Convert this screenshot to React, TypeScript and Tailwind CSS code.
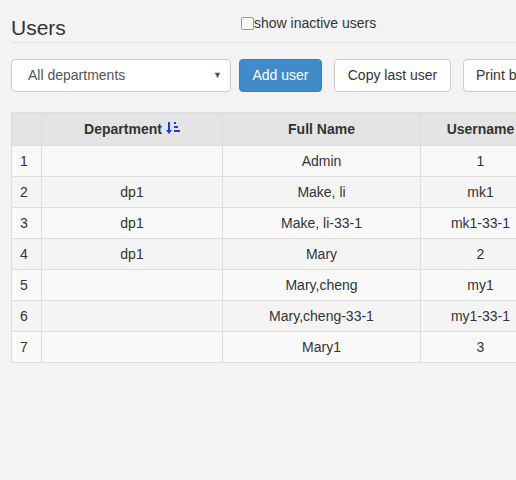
const rows = [
  ["1", "", "Admin", "1"],
  ["2", "dp1", "Make, li", "mk1"],
  ["3", "dp1", "Make, li-33-1", "mk1-33-1"],
  ["4", "dp1", "Mary", "2"],
  ["5", "", "Mary,cheng", "my1"],
  ["6", "", "Mary,cheng-33-1", "my1-33-1"],
  ["7", "", "Mary1", "3"],
];

function SortIcon() {
  return (
    <svg width="14" height="14" viewBox="0 0 14 14" className="ml-1 inline-block align-[-1px]" fill="#1a3fe0">
      <rect x="2" y="1" width="2" height="9" />
      <path d="M0 9h6l-3 4z" />
      <rect x="8" y="1" width="2" height="2" />
      <rect x="8" y="5" width="4" height="2" />
      <rect x="8" y="9" width="6" height="2" />
    </svg>
  );
}

export default function App() {
  return (
    <div className="h-[480px] w-[516px] overflow-hidden bg-[#f3f3f3] text-[14px] text-[#333]" style={{ fontFamily: "Arial, 'Liberation Sans', sans-serif" }}>
      <div className="ml-[11px]">
        <div className="flex items-end border-b border-[#e0e0e0] pt-[13px] pb-[2px]">
          <h1 className="w-[230px] text-[21px] leading-[24px]">Users</h1>
          <label className="mb-[6px] flex items-center">
            <span className="inline-block h-[13px] w-[13px] rounded-[2px] border border-[#999] bg-[#f8f8f8]" />
            show inactive users
          </label>
        </div>
        <div className="mt-[16px] flex items-center">
          <div className="relative flex h-[33px] w-[220px] shrink-0 items-center rounded-[4px] border border-[#ccc] bg-white pl-[16px] text-[#555]">
            All departments
            <span className="absolute right-[8px] top-[9px] text-[9px]">▼</span>
          </div>
          <button className="ml-[8px] h-[33px] w-[83px] shrink-0 rounded-[4px] border border-[#357ebd] bg-[#428bca] text-white">Add user</button>
          <button className="ml-[12px] h-[33px] w-[117px] shrink-0 rounded-[4px] border border-[#ccc] bg-white">Copy last user</button>
          <button className="ml-[12px] h-[33px] w-[120px] shrink-0 rounded-[4px] border border-[#ccc] bg-white pl-[12px] text-left">Print badges</button>
        </div>
        <table className="mt-[20px] w-[640px] border-collapse">
          <thead>
            <tr className="h-[33px] bg-[#e4e4e4] font-bold">
              <th className="w-[30px] border border-[#ddd]"></th>
              <th className="w-[181px] border border-[#ddd]">Department<SortIcon /></th>
              <th className="w-[198px] border border-[#ddd]">Full Name</th>
              <th className="w-[120px] border border-[#ddd]">Username</th>
              <th className="border border-[#ddd]">Email</th>
            </tr>
          </thead>
          <tbody>
            {rows.map((r, i) => (
              <tr key={r[0]} className={`h-[31px] ${i % 2 === 0 ? "bg-[#f9f9f9]" : "bg-[#f4f4f4]"}`}>
                <td className="border border-[#ddd] pl-[8px]">{r[0]}</td>
                <td className="border border-[#ddd] text-center">{r[1]}</td>
                <td className="border border-[#ddd] text-center">{r[2]}</td>
                <td className="border border-[#ddd] text-center">{r[3]}</td>
                <td className="border border-[#ddd]"></td>
              </tr>
            ))}
          </tbody>
        </table>
      </div>
    </div>
  );
}
